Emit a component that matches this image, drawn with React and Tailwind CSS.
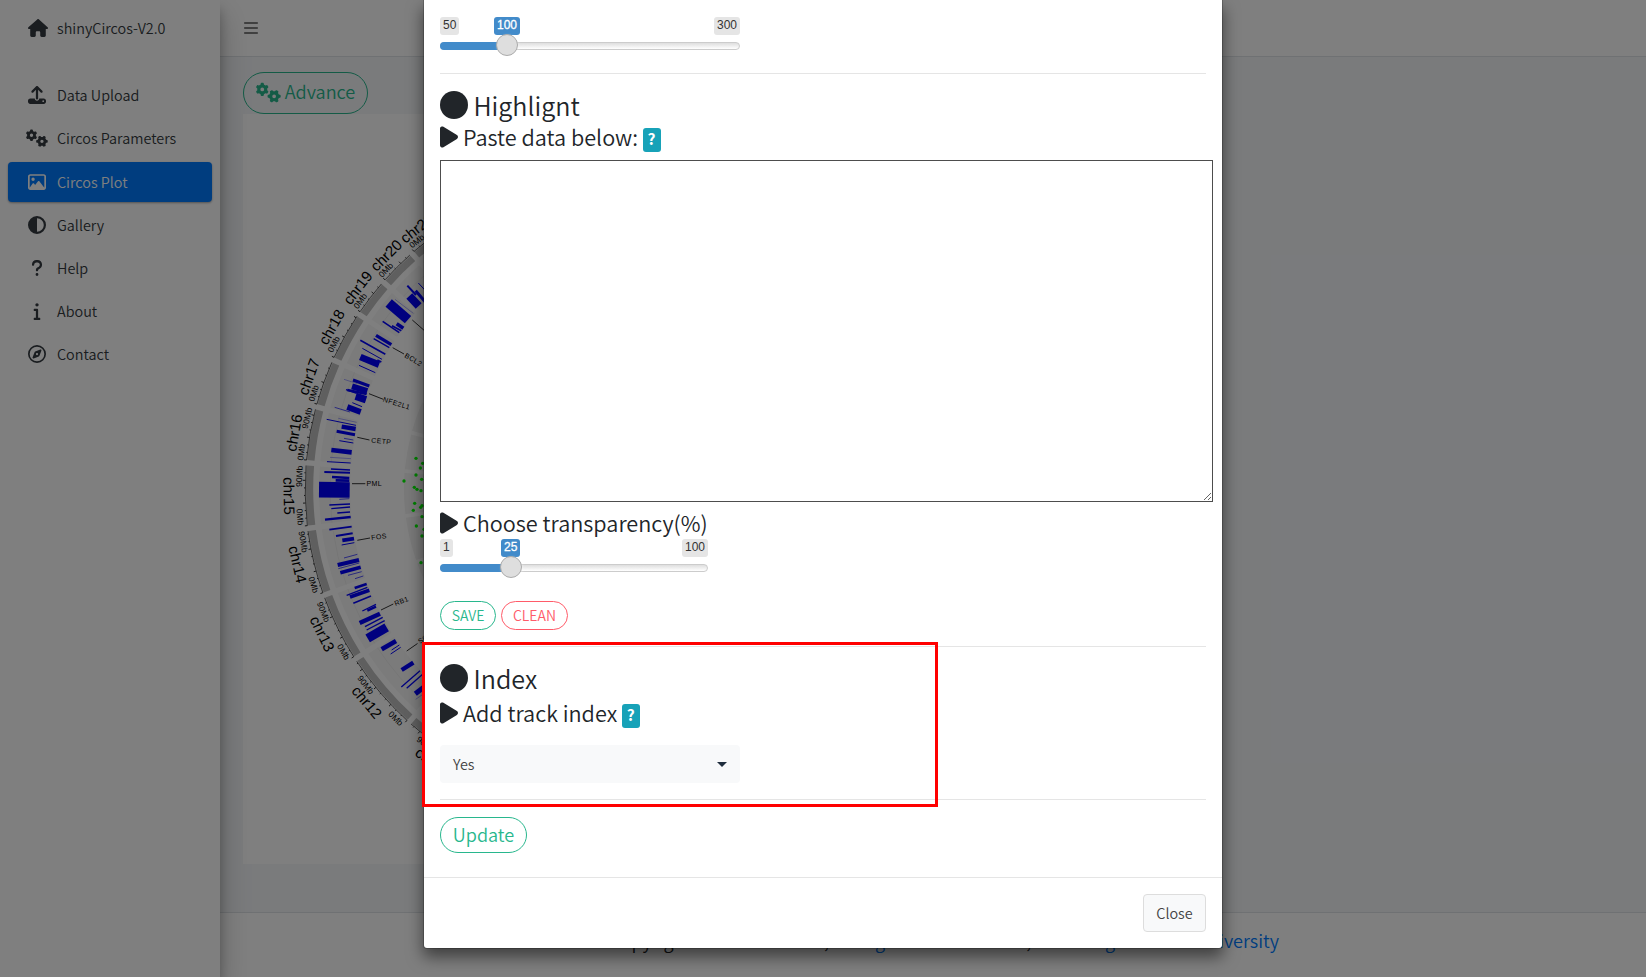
import React from "react";
import { FaHouse, FaUpload, FaGears, FaRegImage, FaCircleHalfStroke, FaQuestion, FaInfo, FaRegCompass, FaBars, FaCircle, FaPlay } from "react-icons/fa6";

const NAV = [
  { label: "Data Upload", Icon: FaUpload },
  { label: "Circos Parameters", Icon: FaGears },
  { label: "Circos Plot", Icon: FaRegImage, active: true },
  { label: "Gallery", Icon: FaCircleHalfStroke },
  { label: "Help", Icon: FaQuestion },
  { label: "About", Icon: FaInfo },
  { label: "Contact", Icon: FaRegCompass },
];

/* Plot geometry: angles are degrees clockwise from the left-hand axis. */
const CX = 375;
const CY = 375;
const polar = (a, r) => {
  const t = (a * Math.PI) / 180;
  return [CX - r * Math.cos(t), CY - r * Math.sin(t)];
};
const sectorPath = (a1, a2, r1, r2) => {
  const [x1, y1] = polar(a1, r1);
  const [x2, y2] = polar(a2, r1);
  const [x3, y3] = polar(a2, r2);
  const [x4, y4] = polar(a1, r2);
  return `M${x1} ${y1}A${r1} ${r1} 0 0 1 ${x2} ${y2}L${x3} ${y3}A${r2} ${r2} 0 0 0 ${x4} ${y4}Z`;
};
const arcPath = (a1, a2, r) => {
  const [x1, y1] = polar(a1, r);
  const [x2, y2] = polar(a2, r);
  return `M${x1} ${y1}A${r} ${r} 0 0 1 ${x2} ${y2}`;
};

const SECTORS = [
  { name: "chr21", from: 49.2, to: 56, zero: 50.8, mid: 52.2 },
  { name: "chr20", from: 41.8, to: 48.2, zero: 43.2, mid: 45.1 },
  { name: "chr19", from: 34.4, to: 40.8, zero: 36, mid: 37.6 },
  { name: "chr18", from: 24.8, to: 33.4, zero: 26.9, mid: 29.4 },
  { name: "chr17", from: 15.7, to: 23.8, zero: 17.4, mid: 19.9 },
  { name: "chr16", from: 5.3, to: 14.7, zero: 6.6, mid: 9.8, ninety: 12.8 },
  { name: "chr15", from: -6.7, to: 4.3, zero: -5, mid: -1.2, ninety: 2.3 },
  { name: "chr14", from: -19.3, to: -7.7, zero: -17.4, mid: -13.2, ninety: -9.5 },
  { name: "chr13", from: -32.3, to: -20.3, zero: -30.6, mid: -26, ninety: -22.6 },
  { name: "chr12", from: -47.5, to: -33.3, zero: -45.8, mid: -40.2, ninety: -37.7 },
  { name: "chr11", from: -63, to: -48.5, zero: -60, mid: -55.5, ninety: -53 },
];

/* Bars as [x1, y1, x2, y2, width] in thirds of a pixel. */
const BARS_TOP = [
  [412, 257, 438, 285, 6], [418, 288, 446, 318, 24], [445, 249, 470, 276, 3], [437, 272, 466, 306, 9],
  [375, 298, 430, 340, 1], [356, 309, 414, 359, 29], [338, 364, 388, 398, 5], [366, 377, 394, 392, 5], [380, 371, 400, 385, 11],
  [271, 421, 346, 463, 5], [318, 406, 364, 434, 10], [311, 416, 358, 443, 4], [277, 445, 336, 478, 3],
  [271, 471, 327, 494, 20], [322, 480, 334, 486, 5], [267, 496, 316, 518, 3],
  [222, 538, 262, 551, 1], [249, 540, 298, 558, 9], [246, 559, 292, 573, 18], [228, 569, 260, 580, 4],
];
const BARS_MID = [
  [232, 0, 290, 12, 8], [257, 19, 288, 29, 22], [247, 38, 276, 50, 3], [232, 51, 272, 66, 17], [194, 52, 240, 66, 2],
  [205, 85, 260, 97, 1], [170, 88, 258, 106, 3], [215, 110, 257, 117, 13], [200, 124, 255, 134, 9], [222, 145, 250, 150, 2],
  [208, 152, 250, 159, 3], [184, 180, 245, 187, 14], [180, 202, 243, 206, 1], [171, 215, 242, 219, 3],
  [183, 237, 240, 240, 4], [163, 246, 240, 248, 6], [186, 261, 238, 264, 8], [197, 271, 238, 272, 8],
  [147, 299, 239, 300, 47], [208, 328, 238, 326, 2], [178, 345, 240, 342, 4], [184, 356, 240, 351, 4],
  [202, 369, 240, 366, 5], [165, 389, 242, 381, 7],
  [178, 419, 245, 410, 5], [198, 438, 248, 430, 6], [217, 451, 252, 446, 11], [215, 465, 253, 458, 3],
  [222, 504, 262, 493, 2], [203, 525, 267, 510, 12], [205, 536, 268, 519, 2], [211, 548, 272, 532, 11],
  [234, 556, 275, 545, 2], [255, 566, 280, 558, 2],
];
const BARS_LOW = [
  [254, 54, 290, 42, 8], [230, 76, 292, 52, 4], [240, 81, 298, 61, 11], [250, 100, 303, 78, 5],
  [277, 123, 318, 103, 4], [292, 122, 318, 110, 7], [269, 159, 330, 131, 13], [285, 170, 338, 142, 4], [290, 180, 344, 152, 4],
  [293, 205, 350, 172, 27], [335, 238, 378, 213, 14], [365, 240, 388, 225, 3], [362, 252, 392, 232, 3],
  [395, 300, 430, 278, 13], [394, 351, 450, 302, 4], [410, 355, 458, 313, 4], [436, 371, 470, 345, 15], [437, 388, 460, 372, 1],
];
const GENES = [
  { x1: 168.3, y1: 206, x2: 182, y2: 218, label: "", tx: 0, ty: 0, rot: 0 },
  { x1: 148.7, y1: 233.7, x2: 160, y2: 240, label: "BCL2", tx: 160, ty: 243, rot: 30 },
  { x1: 125, y1: 279.7, x2: 139.3, y2: 285.3, label: "NFE2L1", tx: 138.5, ty: 287.5, rot: 17 },
  { x1: 113.3, y1: 323.3, x2: 125.5, y2: 326, label: "CETP", tx: 127, ty: 328.5, rot: 6 },
  { x1: 108, y1: 369.7, x2: 121.3, y2: 369.7, label: "PML", tx: 122.5, ty: 372.3, rot: 0 },
  { x1: 113.3, y1: 426.3, x2: 126, y2: 424, label: "FOS", tx: 127.5, ty: 426, rot: -7 },
  { x1: 137, y1: 496, x2: 149.3, y2: 490, label: "RB1", tx: 151.5, ty: 492, rot: -21 },
  { x1: 162.7, y1: 537, x2: 173.5, y2: 529.5, label: "SOD1", tx: 176, ty: 530, rot: -33 },
];
const DOTS = [
  [438, 205], [458, 220], [451, 234], [438, 255], [455, 268], [402, 273], [433, 292], [441, 298], [453, 302], [434, 340],
  [456, 347], [452, 352], [430, 361], [456, 380], [439, 408], [462, 418], [456, 438], [453, 518],
];

const Bars = ({ rows, dy }) => (
  <g transform={`translate(26 ${dy}) scale(0.33333)`} stroke="#0000ff">
    {rows.map((b, i) => (
      <line key={i} x1={b[0]} y1={b[1]} x2={b[2]} y2={b[3]} strokeWidth={b[4]} />
    ))}
  </g>
);

function Tangent({ a, r, size, children }) {
  const [x, y] = polar(a, r);
  const rot = a > 0 ? a - 90 : 90 + a;
  return (
    <text transform={`translate(${x} ${y}) rotate(${rot})`} fontSize={size} textAnchor="middle" dy="0.36em">
      {children}
    </text>
  );
}

function CircosPlot() {
  return (
    <svg width="750" height="750" viewBox="0 0 750 750" className="block font-['Liberation_Sans',Arial,sans-serif] font-normal">
      {SECTORS.map((s) => {
        const ticks = [];
        for (let a = s.from; a <= s.to; a += 1.38) ticks.push(a);
        return (
          <g key={s.name}>
            <path d={sectorPath(s.from, s.to, 313, 305.8)} fill="#bebebe" />
            <path d={sectorPath(s.from, s.to, 300, 269)} fill="#f7f7f7" />
            <path d={arcPath(s.from, s.to, 289)} fill="none" stroke="#e4e4e4" strokeWidth="0.6" />
            <path d={sectorPath(s.from, s.to, 215, 130)} fill="#f2f2f2" />
            <path d={arcPath(s.from, s.to, 313.8)} fill="none" stroke="#222" strokeWidth="0.7" />
            {ticks.map((a, i) => {
              const [x1, y1] = polar(a, 313.8);
              const [x2, y2] = polar(a, i % 3 === 0 ? 316.3 : 315);
              return <line key={i} x1={x1} y1={y1} x2={x2} y2={y2} stroke="#000" strokeWidth="0.8" />;
            })}
          </g>
        );
      })}
      <Bars rows={BARS_TOP} dy={86} />
      <Bars rows={BARS_MID} dy={276} />
      <Bars rows={BARS_LOW} dy={456} />
      <g transform="translate(26 276) scale(0.33333)" fill="#00ff00">
        {DOTS.map((d, i) => (
          <circle key={i} cx={d[0]} cy={d[1]} r="5" />
        ))}
      </g>
      {GENES.map((g, i) => (
        <g key={i}>
          <line x1={g.x1} y1={g.y1} x2={g.x2} y2={g.y2} stroke="#000" strokeWidth="0.8" />
          <text transform={`translate(${g.tx} ${g.ty}) rotate(${g.rot})`} fontSize="7" letterSpacing="0.4">
            {g.label}
          </text>
        </g>
      ))}
      {SECTORS.map((s) => (
        <g key={s.name}>
          <Tangent a={s.mid} r={330} size={15}>{s.name}</Tangent>
          <Tangent a={s.zero} r={320} size={8.5}>0Mb</Tangent>
          {s.ninety !== undefined && <Tangent a={s.ninety} r={320} size={8.5}>90Mb</Tangent>}
        </g>
      ))}
    </svg>
  );
}

function Slider({ min, max, value, width, tag, handle }) {
  return (
    <div className="relative h-[39px] font-['Liberation_Sans',Arial,sans-serif] text-[12px] leading-[16px] font-normal text-[#333]" style={{ width }}>
      <div className="flex h-[18px] justify-between">
        <span className="rounded-[3px] bg-[#e5e5e5] px-[3px]">{min}</span>
        <span className="rounded-[3px] bg-[#e5e5e5] px-[3px]">{max}</span>
      </div>
      <span className="absolute top-0 h-[18px] rounded-[3px] bg-[#428bca] px-[3px] text-white [-webkit-text-stroke:0.3px_white]" style={{ left: tag }}>{value}</span>
      <div className="mt-[7px] h-2 rounded-lg border border-[#ccc] bg-linear-to-b from-[#dedede] to-white">
        <div className="-mx-px -mt-px h-2 rounded-l-lg bg-[#428bca]" style={{ width: handle + 11 }} />
      </div>
      <span className="absolute top-[17px] size-[22px] rounded-full border border-[#ababab] bg-[#dedede] shadow-[1px_1px_3px_rgba(255,255,255,0.3)]" style={{ left: handle }} />
    </div>
  );
}

const SectionTitle = ({ children }) => (
  <div className="flex h-[34px] items-center text-[25.1px] leading-[34px]">
    <FaCircle className="mr-[5.5px] size-7 shrink-0" />
    <span>{children}</span>
  </div>
);

const FieldTitle = ({ children, help }) => (
  <div className="flex h-[29px] items-center text-[21.65px] leading-[29px]">
    <FaPlay className="mr-[5px] h-6 w-[18px] shrink-0" />
    <span className="whitespace-nowrap">{children}</span>
    {help && (
      <span className="mt-[6px] ml-[4.5px] flex h-6 w-[18px] items-center justify-center rounded-[3px] bg-[#17a2b8] pb-px text-[15.5px] leading-none font-bold text-white">
        ?
      </span>
    )}
  </div>
);

const Rule = () => <div className="h-px shrink-0 bg-[#e5e5e5]" />;

export default function App() {
  return (
    <div className="relative h-[977px] w-[1646px] overflow-hidden bg-[#f4f6f9] font-['Noto_Sans_CJK_SC','Source_Sans_Pro',sans-serif] font-[350] text-[#212529]">
      <div className="flex h-full">
        <aside className="relative z-10 h-full w-[220px] shrink-0 bg-white px-2 text-[14.4px] text-[#343a40] shadow-[0_14px_28px_rgba(0,0,0,0.25),0_10px_10px_rgba(0,0,0,0.22)]">
          <div className="flex h-[55px] items-center pl-[20px]">
            <FaHouse className="size-5" />
            <span className="ml-[9px] leading-6">shinyCircos-V2.0</span>
          </div>
          <nav className="mt-5 flex flex-col gap-[3px]">
            {NAV.map(({ label, Icon, active }) => (
              <div key={label} className={active ? "mt-px flex h-10 items-center rounded-[4px] bg-[#007bff] text-white shadow-[0_1px_3px_rgba(0,0,0,0.12),0_1px_2px_rgba(0,0,0,0.24)]" : "flex h-10 items-center"}>
                <span className="flex w-[59px] justify-center pr-px pb-px">
                  <Icon className={label === "Circos Parameters" ? "size-[22px]" : "size-[18px]"} />
                </span>
                <span className="-ml-[10px]">{label}</span>
              </div>
            ))}
          </nav>
        </aside>
        <div className="flex min-w-0 flex-1 flex-col">
          <header className="flex h-[57px] shrink-0 items-center border-b border-[#dee2e6] bg-white pl-[23px] text-[#808080]">
            <FaBars className="size-4" />
          </header>
          <main className="flex flex-1 flex-col items-start pt-[15px] pl-[23px]">
            <button className="flex h-[42px] w-[125px] items-center justify-center gap-1 rounded-full border border-[#28b78d] pb-[2px] text-[18.1px] text-[#28b78d]">
              <FaGears className="size-[25px]" />
              Advance
            </button>
            <div className="h-[750px] w-[751px] bg-white pl-px">
              <CircosPlot />
            </div>
          </main>
          <footer className="h-[65px] shrink-0 border-t border-[#dee2e6] bg-white pt-[12px] pr-[367px] text-right text-[18.1px] leading-[30px] whitespace-nowrap">
            <span className="mr-[2px]">Copyright © 2022</span> Yao Lab, <span className="text-[#007bff]">College of Life Sciences</span>, <span className="text-[#007bff]">Henan Agricultural University</span>
          </footer>
        </div>
      </div>

      <div className="absolute inset-0 z-20 bg-black/50" />

      <section className="absolute top-0 left-[423px] z-30 flex h-[949px] w-[800px] flex-col rounded-b-[4px] border border-t-0 border-black/20 bg-white bg-clip-padding shadow-[0_8px_16px_rgba(0,0,0,0.5)]">
        <div className="flex h-[877px] flex-col px-4 pt-[17px]">
          <Slider min="50" max="300" value="100" width={300} tag={54} handle={56} />
          <div className="h-[17px]" />
          <Rule />
          <div className="h-[14px]" />
          <SectionTitle>Highlignt</SectionTitle>
          <FieldTitle help>Paste data below:</FieldTitle>
          <textarea className="mt-[9px] block h-[342px] w-[773px] shrink-0 resize border border-[#4d4d4d] bg-white" />
          <div className="h-[6px]" />
          <FieldTitle>Choose transparency(%)</FieldTitle>
          <div className="h-[2px]" />
          <Slider min="1" max="100" value="25" width={268} tag={61} handle={60} />
          <div className="mt-[23px] flex gap-[5px] text-[14px]">
            <button className="h-[29px] w-14 rounded-full border border-[#28b78d] text-[#28b78d]">SAVE</button>
            <button className="h-[29px] w-[67px] rounded-full border border-[#ff5b69] text-[#ff5b69]">CLEAN</button>
          </div>
          <div className="h-4" />
          <Rule />
          <div className="h-[14px]" />
          <SectionTitle>Index</SectionTitle>
          <div className="h-[3px]" />
          <FieldTitle help>Add track index</FieldTitle>
          <button className="mt-[18px] flex h-[38px] w-[300px] shrink-0 items-center justify-between rounded-[4px] bg-[#f8f9fa] pr-[13px] pl-[13px] text-[14.4px] text-[#444]">
            Yes
            <span className="border-x-[5px] border-t-[5px] border-x-transparent border-t-[#1f2d3d]" />
          </button>
          <div className="h-4" />
          <Rule />
          <button className="mt-[17px] h-[36px] w-[87px] shrink-0 rounded-full border border-[#28b78d] pb-[2px] text-[18.1px] leading-none text-[#28b78d]">Update</button>
        </div>
        <Rule />
        <div className="flex flex-1 items-start justify-end pt-4 pr-4">
          <button className="h-[38px] w-[63px] rounded-[4px] border border-[#ddd] bg-[#f8f9fa] text-[14.4px] text-[#444]">Close</button>
        </div>
      </section>

      <div className="absolute top-[642px] left-[422px] z-40 h-[165px] w-[516px] border-3 border-[#ff0000]" />
    </div>
  );
}
